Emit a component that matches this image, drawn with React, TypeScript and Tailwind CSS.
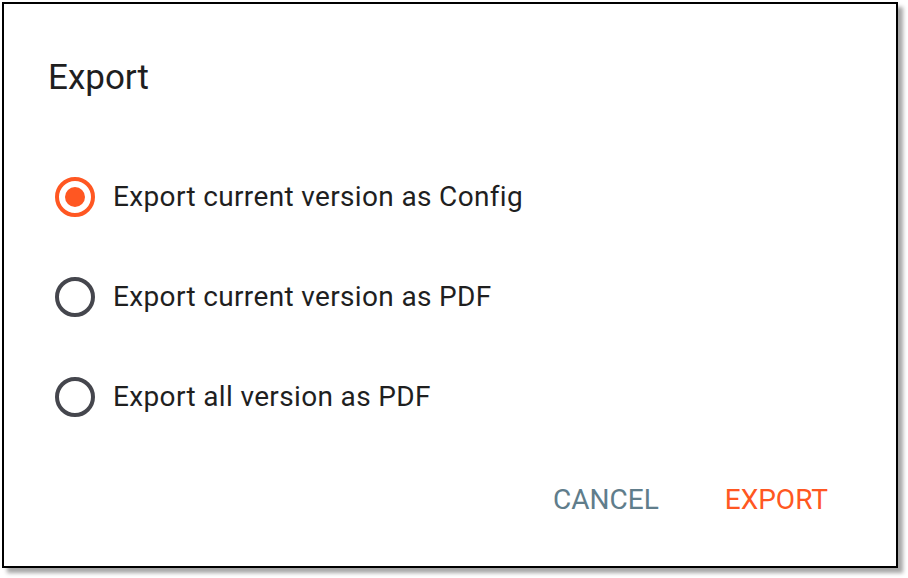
import { useState } from "react";

const OPTIONS = [
  "Export current version as Config",
  "Export current version as PDF",
  "Export all version as PDF",
];

function RadioIcon({ checked }: { checked: boolean }) {
  const color = checked ? "#ff5722" : "#45464d";
  return (
    <svg width="40" height="40" viewBox="0 0 40 40" className="shrink-0">
      <circle cx="20" cy="20" r="18" fill="none" stroke={color} strokeWidth="4" />
      {checked && <circle cx="20" cy="20" r="10" fill={color} />}
    </svg>
  );
}

export default function App() {
  const [value, setValue] = useState(0);

  return (
    <div className="w-[908px] h-[578px] bg-white p-[2px] font-['Roboto',sans-serif]">
      <div className="w-[896px] h-[566px] border-2 border-black bg-white shadow-[5px_5px_4px_rgba(0,0,0,0.35)] flex flex-col">
        {/* Title */}
        <h2 className="pl-[44px] pt-[52px] text-[35px] leading-[44px] text-[#1f1f1f] font-normal">
          Export
        </h2>

        {/* Options */}
        <div className="flex flex-col mt-[77px] pl-[51px] gap-[60px]">
          {OPTIONS.map((label, i) => (
            <label
              key={label}
              className="flex items-center gap-[18px] h-[40px] cursor-pointer"
              onClick={() => setValue(i)}
            >
              <RadioIcon checked={value === i} />
              <span className="text-[28px] text-[#1f1f1f] tracking-[0.35px]">{label}</span>
            </label>
          ))}
        </div>

        {/* Actions */}
        <div className="mt-auto mb-[50px] flex justify-end items-center gap-[66px] pr-[68px]">
          <button className="text-[28px] leading-[32px] text-[#607d8b] uppercase">Cancel</button>
          <button className="text-[28px] leading-[32px] text-[#ff5722] uppercase">Export</button>
        </div>
      </div>
    </div>
  );
}
